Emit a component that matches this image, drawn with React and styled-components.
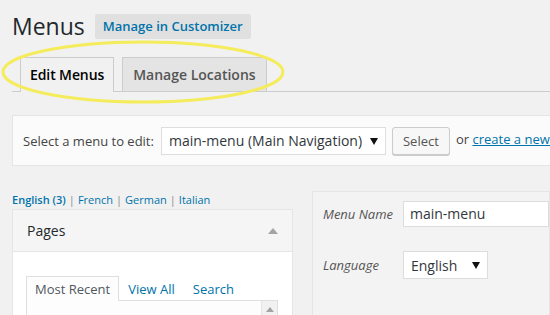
import React from "react";
import styled, { createGlobalStyle } from "styled-components";

const Global = createGlobalStyle`
  html, body { margin: 0; padding: 0; background: #f1f1f1; }
  body { font-family: "Open Sans", "Noto Sans", sans-serif; color: #444; font-size: 13px; }
`;

const Page = styled.div`
  position: relative;
  width: 550px;
  height: 315px;
  overflow: hidden;
  padding-left: 12px;
  box-sizing: border-box;
`;

const TitleRow = styled.div`
  display: flex;
  align-items: center;
  gap: 11px;
  padding-top: 10px;
  height: 32px;
  box-sizing: content-box;
`;

const Title = styled.h1`
  margin: 0;
  font-size: 23px;
  font-weight: 400;
  line-height: 29px;
  color: #23282d;
`;

const ActionButton = styled.a`
  display: inline-block;
  background: #e0e0e0;
  color: #0073aa;
  font-size: 13px;
  font-weight: 600;
  padding: 0 8px;
  line-height: 25px;
  border-radius: 2px;
  text-decoration: none;
  margin-top: 1px;
  margin-left: -1px;
`;

const TabWrapper = styled.div`
  display: flex;
  align-items: flex-end;
  margin-top: 15px;
  border-bottom: 1px solid #ccc;
  width: 600px;
`;

const Tab = styled.a`
  margin-left: 8px;
  padding: 0 ${(p) => (p.$active ? "9px" : "10px")};
  line-height: 34px;
  font-size: 14px;
  font-weight: 600;
  border: 1px solid #ccc;
  border-bottom: none;
  text-decoration: none;
  color: ${(p) => (p.$active ? "#000" : "#555")};
  background: ${(p) => (p.$active ? "#f1f1f1" : "#e4e4e4")};
  margin-bottom: ${(p) => (p.$active ? "-1px" : "0")};
  height: ${(p) => (p.$active ? "35px" : "34px")};
  box-sizing: border-box;
  letter-spacing: ${(p) => (p.$active ? "-0.1px" : "0")};
`;

const ManageBar = styled.div`
  margin-top: 23px;
  width: 600px;
  height: 51px;
  box-sizing: border-box;
  background: #fbfbfb;
  border: 1px solid #e5e5e5;
  display: flex;
  align-items: center;
  padding-left: 10px;
  white-space: nowrap;
`;

const BarLabel = styled.span`
  font-size: 13px;
  color: #444;
  margin-right: 7px;
`;

const SelectBox = styled.div`
  display: flex;
  align-items: center;
  justify-content: space-between;
  box-sizing: border-box;
  width: ${(p) => p.$w}px;
  height: 28px;
  border: 1px solid #ddd;
  background: #fff;
  padding: 0 7px 0 7px;
  font-size: 14px;
  color: #32373c;
`;

const Caret = styled.span`
  width: 0;
  height: 0;
  border-left: 4px solid transparent;
  border-right: 4px solid transparent;
  border-top: 7px solid #111;
  margin-top: 1px;
`;

const Button = styled.button`
  margin-left: 6px;
  height: 28px;
  width: 58px;
  box-sizing: border-box;
  border: 1px solid #ccc;
  border-radius: 3px;
  background: #f7f7f7;
  box-shadow: 0 1px 0 #ccc;
  color: #555;
  font-family: "Open Sans", sans-serif;
  font-size: 13px;
  padding: 0;
`;

const OrText = styled.span`
  margin-left: 6px;
  font-size: 13px;
  color: #444;
  margin-top: -3px;
`;

const Link = styled.a`
  color: #0073aa;
  text-decoration: ${(p) => (p.$underline ? "underline" : "none")};
  font-weight: ${(p) => (p.$bold ? 600 : 400)};
`;

const Columns = styled.div`
  display: flex;
  gap: 19px;
  margin-top: 26px;
  align-items: flex-start;
`;

const LeftCol = styled.div`
  width: 281px;
  flex: none;
`;

const LangLinks = styled.div`
  font-size: 11px;
  line-height: 18px;
  color: #666;
  margin-top: -1px;
`;

const Sep = styled.span`
  color: #888;
  margin: 0 3px;
`;

const Box = styled.div`
  border: 1px solid #e5e5e5;
  background: #fff;
  height: 200px;
`;

const BoxHeader = styled.div`
  height: 42px;
  box-sizing: border-box;
  background: #f5f5f5;
  border-bottom: 1px solid #e5e5e5;
  display: flex;
  align-items: center;
  justify-content: space-between;
  padding: 0 14px 0 14px;
  font-size: 14px;
  color: #23282d;
`;

const UpArrow = styled.span`
  width: 0;
  height: 0;
  border-left: 5px solid transparent;
  border-right: 5px solid transparent;
  border-bottom: 6px solid #a0a5aa;
`;

const BoxBody = styled.div`
  padding: 24px 14px 0 13px;
`;

const InnerTabs = styled.div`
  display: flex;
  align-items: flex-end;
`;

const InnerTab = styled.span`
  font-size: 13px;
  line-height: 24px;
  padding: 0 8px;
  color: ${(p) => (p.$active ? "#50575e" : "#0073aa")};
  border: 1px solid ${(p) => (p.$active ? "#dfdfdf" : "transparent")};
  border-bottom: none;
  background: ${(p) => (p.$active ? "#fdfdfd" : "transparent")};
  margin-right: 0;
  margin-bottom: -1px;
  position: relative;
  z-index: 1;
`;

const InnerPanel = styled.div`
  border: 1px solid #dfdfdf;
  background: #fdfdfd;
  height: 60px;
  display: flex;
  justify-content: flex-end;
`;

const ScrollTrack = styled.div`
  width: 15px;
  border-left: 1px solid #e5e5e5;
  background: #f1f1f1;
  display: flex;
  justify-content: center;
  padding-top: 6px;
`;

const SmallUp = styled.span`
  width: 0;
  height: 0;
  border-left: 4px solid transparent;
  border-right: 4px solid transparent;
  border-bottom: 5px solid #a3a3a3;
`;

const RightBox = styled.div`
  margin-top: -1px;
  width: 300px;
  height: 200px;
  background: #f3f3f3;
  border: 1px solid #e5e5e5;
  padding: 9px 0 0 10px;
  display: grid;
  grid-template-columns: 80px auto;
  row-gap: 24px;
  align-items: center;
  align-content: start;
`;

const FieldLabel = styled.span`
  font-style: italic;
  font-size: 13px;
  color: #555;
`;

const TextInput = styled.div`
  height: 26px;
  box-sizing: border-box;
  border: 1px solid #ddd;
  background: #fff;
  padding: 0 6px;
  font-size: 14px;
  line-height: 24px;
  color: #32373c;
`;

const Highlight = styled.svg`
  position: absolute;
  left: 0;
  top: 0;
  pointer-events: none;
`;

export default function App() {
  return (
    <Page>
      <Global />
      <TitleRow>
        <Title>Menus</Title>
        <ActionButton>Manage in Customizer</ActionButton>
      </TitleRow>
      <TabWrapper>
        <Tab $active>Edit Menus</Tab>
        <Tab>Manage Locations</Tab>
      </TabWrapper>
      <ManageBar>
        <BarLabel>Select a menu to edit:</BarLabel>
        <SelectBox $w={225}>
          <span>main-menu (Main Navigation)</span>
          <Caret />
        </SelectBox>
        <Button>Select</Button>
        <OrText>
          or <Link $underline>create a new menu</Link>.
        </OrText>
      </ManageBar>
      <Columns>
        <LeftCol>
          <LangLinks>
            <Link $bold>English (3)</Link>
            <Sep>|</Sep>
            <Link>French</Link>
            <Sep>|</Sep>
            <Link>German</Link>
            <Sep>|</Sep>
            <Link>Italian</Link>
          </LangLinks>
          <Box>
            <BoxHeader>
              <span>Pages</span>
              <UpArrow />
            </BoxHeader>
            <BoxBody>
              <InnerTabs>
                <InnerTab $active>Most Recent</InnerTab>
                <InnerTab>View All</InnerTab>
                <InnerTab>Search</InnerTab>
              </InnerTabs>
              <InnerPanel>
                <ScrollTrack>
                  <SmallUp />
                </ScrollTrack>
              </InnerPanel>
            </BoxBody>
          </Box>
        </LeftCol>
        <RightBox>
          <FieldLabel>Menu Name</FieldLabel>
          <TextInput>main-menu</TextInput>
          <FieldLabel>Language</FieldLabel>
          <SelectBox $w={85}>
            <span>English</span>
            <Caret />
          </SelectBox>
        </RightBox>
      </Columns>
      <Highlight width="550" height="315" viewBox="0 0 550 315">
        <ellipse cx="143" cy="72" rx="140" ry="30" fill="none" stroke="#f5ec5c" strokeWidth="3" />
      </Highlight>
    </Page>
  );
}
